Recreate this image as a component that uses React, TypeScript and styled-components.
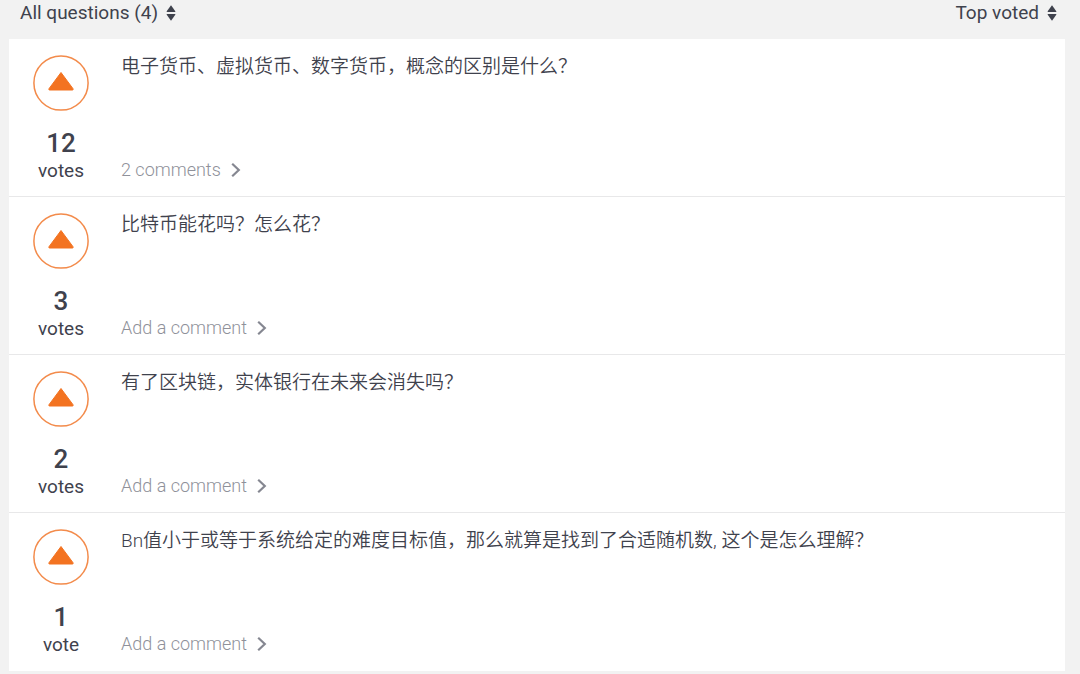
import React from "react";
import styled, { createGlobalStyle } from "styled-components";

const GlobalStyle = createGlobalStyle`
  * { box-sizing: border-box; }
  body {
    margin: 0;
    background: #f2f2f2;
    color: #3f424d;
    font-family: Roboto, "Noto Sans CJK SC", sans-serif;
    font-size: 19px;
    line-height: 24px;
  }
  button { font: inherit; color: inherit; background: none; border: 0; padding: 0; cursor: pointer; }
`;

const Page = styled.main`
  padding: 0 15px 3px 9px;
`;

const Toolbar = styled.header`
  display: flex;
  justify-content: space-between;
  padding: 1px 8px 14px 11px;
`;

const SortButton = styled.button`
  display: flex;
  align-items: center;
  gap: 8px;
`;

const QuestionList = styled.ul`
  list-style: none;
  margin: 0;
  padding: 0;
  background: #fff;
`;

const QuestionRow = styled.li`
  display: flex;
  min-height: 158px;
  padding: 16px 24px 13px;
  border-bottom: 1px solid #e8e8e9;
  &:last-child { border-bottom-color: #fff; }
`;

const VoteColumn = styled.div`
  display: flex;
  flex-direction: column;
  align-items: center;
  width: 56px;
  margin-right: 32px;
`;

const VoteButton = styled.button`
  width: 56px;
  height: 56px;
  svg { display: block; }
`;

const VoteCount = styled.strong`
  margin-top: 16px;
  font-size: 26px;
  line-height: 32px;
  font-weight: 500;
`;

const Body = styled.div`
  display: flex;
  flex: 1;
  flex-direction: column;
  justify-content: space-between;
  align-items: flex-start;
  min-width: 0;
  padding-bottom: 1px;
`;

const Title = styled.h2`
  margin: 0;
  font-size: 19px;
  line-height: 24px;
  font-weight: 350;
`;

const CommentLink = styled.a`
  display: flex;
  align-items: center;
  gap: 10px;
  color: #8f919a;
  font-size: 18px;
  font-weight: 300;
  text-decoration: none;
`;

const SortIcon = () => (
  <svg width="10" height="16" viewBox="0 0 10 16" fill="currentColor" aria-hidden="true">
    <path d="M5 .3 9.3 6.2Q9.7 7 8.9 7H1.1Q.3 7 .7 6.2Z" />
    <path d="M5 15.7.7 9.8Q.3 9 1.1 9h7.8q.8 0 .4.8Z" />
  </svg>
);

const UpIcon = () => (
  <svg width="56" height="56" viewBox="0 0 56 56" aria-hidden="true">
    <circle cx="28" cy="28" r="27.1" fill="none" stroke="#f38b4b" strokeWidth="1.5" />
    <path
      d="M28 17.5 40 33.7Q40.6 35 39.4 35H16.6Q15.4 35 16 33.7Z"
      fill="#f37321"
      stroke="#f37321"
      strokeWidth="1"
      strokeLinejoin="round"
    />
  </svg>
);

const ChevronIcon = () => (
  <svg width="10" height="16" viewBox="0 0 10 16" fill="none" stroke="#858791" strokeWidth="2.2" aria-hidden="true">
    <path d="M1.2 1.8 7.8 8l-6.6 6.2" />
  </svg>
);

const questions = [
  { votes: 12, title: "电子货币、虚拟货币、数字货币，概念的区别是什么？", comments: 2 },
  { votes: 3, title: "比特币能花吗？怎么花？", comments: 0 },
  { votes: 2, title: "有了区块链，实体银行在未来会消失吗？", comments: 0 },
  { votes: 1, title: "Bn值小于或等于系统给定的难度目标值，那么就算是找到了合适随机数, 这个是怎么理解？", comments: 0 },
];

export default function App() {
  return (
    <>
      <GlobalStyle />
      <Page>
        <Toolbar>
          <SortButton type="button">All questions ({questions.length})<SortIcon /></SortButton>
          <SortButton type="button">Top voted<SortIcon /></SortButton>
        </Toolbar>
        <QuestionList>
          {questions.map((q) => (
            <QuestionRow key={q.title}>
              <VoteColumn>
                <VoteButton type="button" aria-label="Vote up"><UpIcon /></VoteButton>
                <VoteCount>{q.votes}</VoteCount>
                <span>{q.votes === 1 ? "vote" : "votes"}</span>
              </VoteColumn>
              <Body>
                <Title lang="zh-CN">{q.title}</Title>
                <CommentLink href="#comments">
                  {q.comments ? `${q.comments} comments` : "Add a comment"}
                  <ChevronIcon />
                </CommentLink>
              </Body>
            </QuestionRow>
          ))}
        </QuestionList>
      </Page>
    </>
  );
}
